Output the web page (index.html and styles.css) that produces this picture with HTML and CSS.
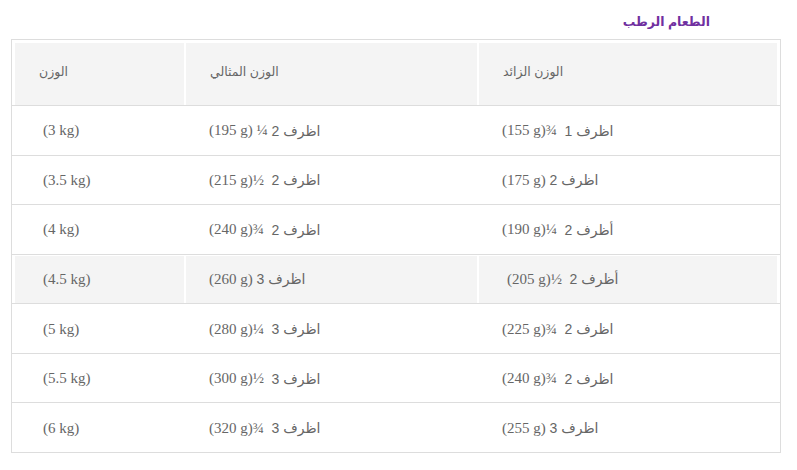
FILE: index.html
```html
<!DOCTYPE html>
<html lang="ar">
<head>
<meta charset="utf-8">
<title>الطعام الرطب</title>
<link rel="stylesheet" href="styles.css">
</head>
<body>
<div class="page">
  <h3 class="title"><span dir="rtl">الطعام الرطب</span></h3>
  <div class="table">
    <div class="row head">
      <div class="cell"><span class="ar">الوزن</span></div>
      <div class="cell"><span class="ar">الوزن المثالي</span></div>
      <div class="cell"><span class="ar">الوزن الزائد</span></div>
    </div>
    <div class="row">
      <div class="cell c1">(3 kg)</div>
      <div class="cell">(195 g) ¼ <span class="ar">2 اظرف</span></div>
      <div class="cell">(155 g)¾&nbsp; <span class="ar">1 اظرف</span></div>
    </div>
    <div class="row">
      <div class="cell c1">(3.5 kg)</div>
      <div class="cell">(215 g)½&nbsp; <span class="ar">2 اظرف</span></div>
      <div class="cell">(175 g) <span class="ar">2 اظرف</span></div>
    </div>
    <div class="row">
      <div class="cell c1">(4 kg)</div>
      <div class="cell">(240 g)¾&nbsp; <span class="ar">2 اظرف</span></div>
      <div class="cell">(190 g)¼&nbsp; <span class="ar">2 أظرف</span></div>
    </div>
    <div class="row hover">
      <div class="cell c1">(4.5 kg)</div>
      <div class="cell">(260 g) <span class="ar">3 اظرف</span></div>
      <div class="cell c1">(205 g)½&nbsp; <span class="ar">2 أظرف</span></div>
    </div>
    <div class="row">
      <div class="cell c1">(5 kg)</div>
      <div class="cell">(280 g)¼&nbsp; <span class="ar">3 اظرف</span></div>
      <div class="cell">(225 g)¾&nbsp; <span class="ar">2 اظرف</span></div>
    </div>
    <div class="row">
      <div class="cell c1">(5.5 kg)</div>
      <div class="cell">(300 g)½&nbsp; <span class="ar">3 اظرف</span></div>
      <div class="cell">(240 g)¾&nbsp; <span class="ar">2 اظرف</span></div>
    </div>
    <div class="row last">
      <div class="cell c1">(6 kg)</div>
      <div class="cell">(320 g)¾&nbsp; <span class="ar">3 اظرف</span></div>
      <div class="cell">(255 g) <span class="ar">3 اظرف</span></div>
    </div>
  </div>
</div>
</body>
</html>
```
FILE: styles.css
```css
html, body {
  margin: 0;
  padding: 0;
  background: #fff;
}
.page {
  padding: 8px 0 0 11px;
  font-family: "Liberation Serif", "DejaVu Sans", serif;
}
.title {
  margin: 0 0 7px 0;
  padding: 4px 0 0 0;
  width: 699px;
  text-align: right;
  font-family: "Liberation Sans", "DejaVu Sans", sans-serif;
  font-size: 12.5px;
  line-height: 20px;
  font-weight: bold;
  color: #7030a0;
}
.table {
  width: 770px;
  box-sizing: border-box;
  border: 1px solid #ddd;
  padding-top: 2px;
}
.row {
  display: grid;
  grid-template-columns: 171px 293px 300px;
  padding: 1px 2px 0 2px;
  border-bottom: 1px solid #ddd;
}
.row.last {
  border-bottom: none;
}
.cell {
  box-sizing: border-box;
  height: 47.57px;
  border-left: 1px solid #fff;
  border-right: 1px solid #fff;
  padding-left: 23px;
  display: flex;
  align-items: center;
  font-size: 15px;
  color: #666;
  white-space: pre;
}
.c1 {
  padding-left: 28px;
}
.head .cell {
  height: 62px;
  background: #f4f4f4;
  padding-left: 24px;
  padding-bottom: 6px;
}
.head .ar {
  font-size: 12.5px;
}
.row.hover .cell {
  background: #f4f4f4;
}
.ar {
  font-family: "Liberation Sans", "DejaVu Sans", sans-serif;
  font-size: 14px;
}
```
